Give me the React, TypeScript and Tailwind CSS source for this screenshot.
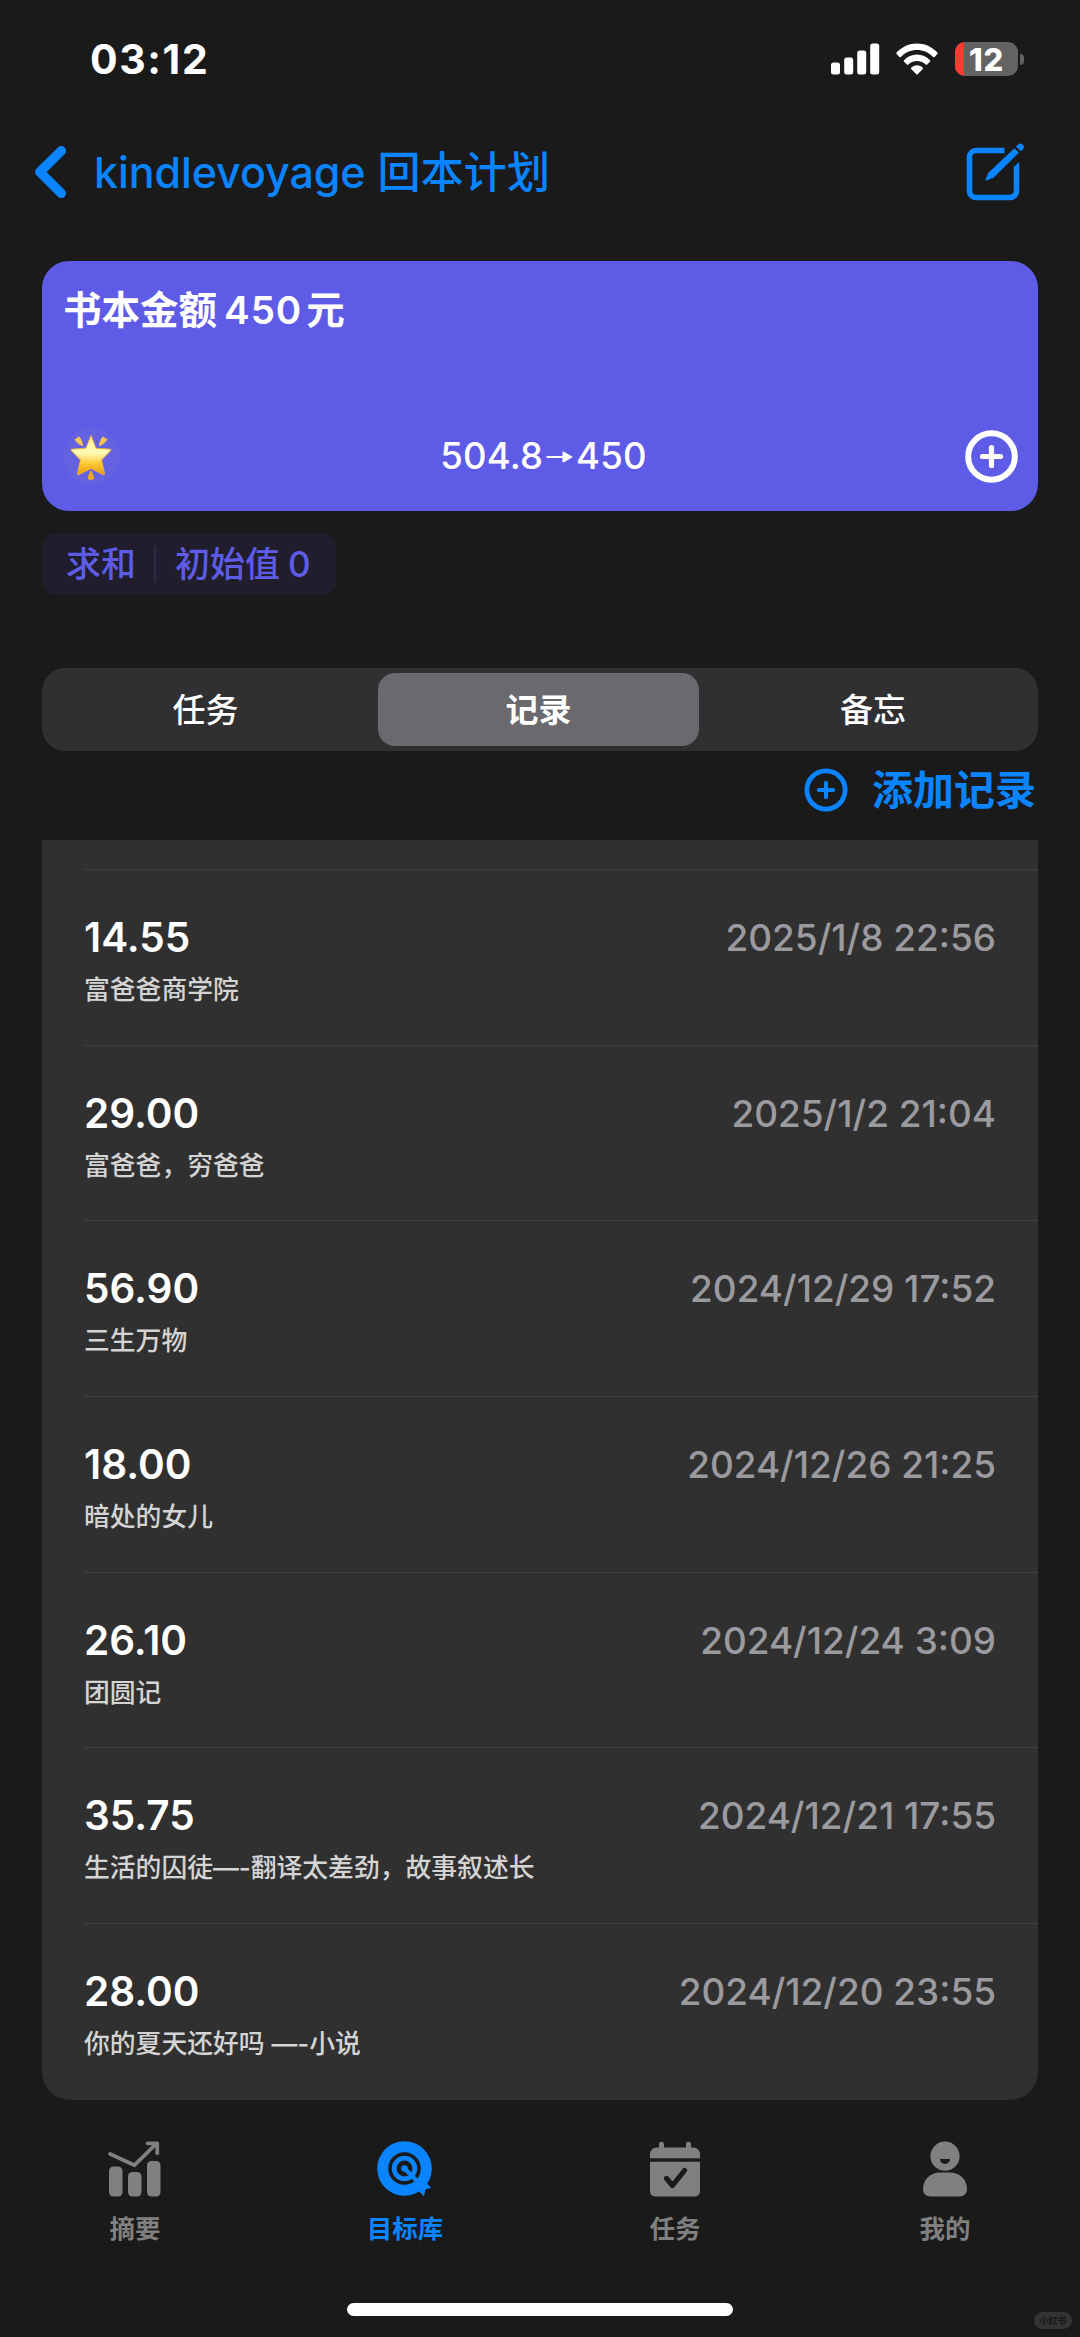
import React from "react";

const records = [
  { amount: "14.55", note: "富爸爸商学院", date: "2025/1/8 22:56" },
  { amount: "29.00", note: "富爸爸，穷爸爸", date: "2025/1/2 21:04" },
  { amount: "56.90", note: "三生万物", date: "2024/12/29 17:52" },
  { amount: "18.00", note: "暗处的女儿", date: "2024/12/26 21:25" },
  { amount: "26.10", note: "团圆记", date: "2024/12/24 3:09" },
  { amount: "35.75", note: "生活的囚徒—-翻译太差劲，故事叙述长", date: "2024/12/21 17:55" },
  { amount: "28.00", note: "你的夏天还好吗 —-小说", date: "2024/12/20 23:55" },
];

function StatusBar() {
  return (
    <div className="flex h-[118px] shrink-0 items-center justify-between pl-[90px] pr-[56px] text-white">
      <span className="text-[41px] leading-none font-bold tracking-[1.600px]">03:12</span>
      <div className="flex items-center">
        <svg width="49" height="32" viewBox="0 0 49 32" fill="#fff">
          <rect x="0" y="19.5" width="9" height="12" rx="2.5" />
          <rect x="13.2" y="14.5" width="9" height="17" rx="2.5" />
          <rect x="26.2" y="7.5" width="9" height="24" rx="2.5" />
          <rect x="39.2" y="0.5" width="9" height="31" rx="2.5" />
        </svg>
        <svg className="ml-[16px]" width="42" height="32" viewBox="0 0 42 32" fill="#fff">
          <path d="M0.6 9.6C6 3.8 13.2 0.5 21 0.5s15 3.3 20.400 9.100c.4.5.4 1 0 1.400l-2.800 2.900c-.4.4-1 .4-1.400 0C32.800 9.500 27.200 6.900 21 6.900S9.200 9.500 4.800 13.900c-.4.400-1 .4-1.400 0L.6 11c-.4-.4-.4-.9 0-1.400Z" />
          <path d="M8 17.300C11.400 13.700 16 11.600 21 11.600s9.600 2.100 13 5.700c.4.400.4 1 0 1.400l-2.900 2.900c-.4.400-1 .4-1.400 0C27.400 19.300 24.400 18 21 18s-6.400 1.300-8.700 3.600c-.4.400-1 .4-1.400 0L8 18.700c-.4-.4-.4-1 0-1.400Z" />
          <path d="M15.200 24.700c1.500-1.500 3.500-2.400 5.800-2.400s4.300.9 5.800 2.400c.4.400.4 1 0 1.400l-5.100 5.100c-.4.400-1 .4-1.400 0l-5.100-5.100c-.4-.4-.4-1 0-1.400Z" />
        </svg>
        <div className="ml-[17px] flex items-center">
          <div className="relative flex h-[34px] w-[63px] items-center justify-center overflow-hidden rounded-[10px] bg-[#636363]">
            <div className="absolute inset-y-0 left-0 w-[9px] bg-[#ff3b30]" />
            <span className="relative text-[31px] leading-none font-extrabold tracking-[0.800px]">12</span>
          </div>
          <div className="ml-[2px] h-[11px] w-[4px] rounded-r-full bg-[#636363]" />
        </div>
      </div>
    </div>
  );
}

function NavBar() {
  return (
    <div className="flex h-[108px] shrink-0 items-center pl-[34px] pr-[56px] text-[#0a84ff]">
      <svg width="33" height="54" viewBox="0 0 33 54" fill="none" stroke="#0a84ff" strokeWidth="9.500" strokeLinecap="round" strokeLinejoin="round">
        <path d="M27.300 5.800 5.800 27l21.500 21.300" />
      </svg>
      <div className="ml-[27px] flex text-[43px] leading-[54px] font-medium whitespace-nowrap">
        <span className="tracking-[-0.080px]">kindlevoyage</span>
        <span className="ml-[12px] tracking-[0.200px]">回本计划</span>
      </div>
      <svg className="ml-auto" width="58" height="58" viewBox="0 0 58 58" fill="none">
        <path d="M39 7H10.500A6.500 6.500 0 0 0 4 13.500v34a6.500 6.500 0 0 0 6.500 6.500h34a6.500 6.500 0 0 0 6.500-6.500V19" stroke="#0a84ff" strokeWidth="5.600" transform="translate(-0.500 0.500)" />
        <path d="M42 2 60 2 56 16 48 24Z" fill="#1a1a1a" />
        <path d="M48.400 5.200 52.900 9.700 27.500 34.700 20.600 37.500c-.7.300-1.400-.4-1.100-1.100l2.900-6.700Z" fill="#0a84ff" />
        <path d="M50 3.600 52 1.700a3.400 3.400 0 0 1 4.800 0 3.400 3.400 0 0 1 0 4.800L54.600 8.300Z" fill="#0a84ff" />
      </svg>
    </div>
  );
}

function GlowingStar() {
  return (
    <svg width="42" height="46" viewBox="0 0 42 46">
      <defs>
        <linearGradient id="star" x1="0" y1="0" x2="0" y2="1">
          <stop offset="0" stopColor="#fff0a0" />
          <stop offset="0.450" stopColor="#fffbb5" />
          <stop offset="0.720" stopColor="#fdc834" />
          <stop offset="1" stopColor="#e99a0c" />
        </linearGradient>
      </defs>
      <path d="M21 1.500 26 14.200 40 15.200c1 .1 1.200.9.500 1.600L31.500 26l3 13.500c.2 1-.6 1.600-1.400 1.100L21 34.500 8.900 40.600c-.8.500-1.600-.1-1.400-1.100l3-13.500L1.500 16.800c-.7-.7-.5-1.500.5-1.600L16 14.200Z" fill="url(#star)" stroke="#f3b42c" strokeWidth="0.900" strokeLinejoin="round" />
      <path d="M21 36.500c.8 0 3.200 6.500 3.200 8.200-1.500 1.300-4.900 1.300-6.400 0 0-1.700 2.400-8.200 3.200-8.200Z" fill="#efa926" />
      <path d="M4.500 5.500 9 2.500c1 0 4.500 7 4 9.500-1.500.8-7.500-4.500-8.500-6.500Z" fill="#f5c653" />
      <path d="M37.500 5.500 33 2.500c-1 0-4.500 7-4 9.500 1.500.8 7.500-4.500 8.500-6.500Z" fill="#f5c653" />
    </svg>
  );
}

function GoalCard() {
  return (
    <div className="mx-[42px] mt-[35px] flex h-[250px] shrink-0 flex-col justify-between rounded-[27px] bg-[#5e5ce6] pt-[25px] pr-[21px] pb-[26px] pl-[21px] text-white">
      <div className="flex text-[38.500px] leading-[48px] font-semibold">
        <span>书本金额</span>
        <span className="ml-[7px] tracking-[1px]">450</span>
        <span className="ml-[4px]">元</span>
      </div>
      <div className="grid grid-cols-[57px_1fr_52px] items-center">
        <div className="flex h-[57px] w-[57px] items-center justify-center rounded-full bg-[#6562e2] pr-[2px]">
          <GlowingStar />
        </div>
        <div className="flex items-center justify-center pl-[2px] text-[36.500px] leading-[57px] font-medium">
          <span className="tracking-[0.150px]">504.8</span>
          <svg className="mx-[3px]" width="27" height="12" viewBox="0 0 27 12" fill="#fff">
            <path d="M0.500 5h16V1.200c0-.6.500-.9 1-.6l8.600 4.800c.5.300.5.900 0 1.200l-8.600 4.800c-.5.300-1 0-1-.6V7H.5Z" />
          </svg>
          <span className="tracking-[0.150px]">450</span>
        </div>
        <svg width="53" height="53" viewBox="0 0 53 53" fill="none" stroke="#fff" strokeLinecap="round">
          <circle cx="26.500" cy="26.500" r="23.300" strokeWidth="6" />
          <path d="M26.500 17.500v18M17.500 26.500h18" strokeWidth="5.200" />
        </svg>
      </div>
    </div>
  );
}

function SummaryTag() {
  return (
    <div className="mt-[23px] ml-[42px] flex h-[60px] w-[294px] shrink-0 items-center rounded-[11px] bg-[#201e2d] pl-[24px] text-[35px] leading-[48px] font-medium text-[#5e5ce6]">
      <span>求和</span>
      <span className="ml-[18px] h-[36px] w-[2px] bg-[#2a2b4c]" />
      <span className="ml-[19px]">初始值</span>
      <span className="ml-[8px]">0</span>
    </div>
  );
}

function Segments() {
  return (
    <div className="mx-[42px] mt-[74px] grid h-[83px] shrink-0 grid-cols-[331px_321px_1fr] items-center rounded-[23px] bg-[#303032] pl-[5px] text-center text-[33px] leading-[48px] font-medium text-white">
      <span className="pr-[14px]">任务</span>
      <span className="flex h-[73px] items-center justify-center rounded-[17px] bg-[#6a696e] font-bold">记录</span>
      <span className="pl-[9px]">备忘</span>
    </div>
  );
}

function AddRecord() {
  return (
    <div className="flex h-[78px] shrink-0 items-center justify-end pr-[44px] text-[#0a84ff]">
      <svg width="44" height="44" viewBox="0 0 44 44" fill="none" stroke="#0a84ff" strokeLinecap="round">
        <circle cx="22" cy="22" r="19.100" strokeWidth="4.800" />
        <path d="M22 14.800v14.400M14.800 22h14.400" strokeWidth="4" />
      </svg>
      <span className="ml-[24px] text-[41px] leading-[56px] font-bold">添加记录</span>
    </div>
  );
}

function RecordList() {
  return (
    <div className="mx-[42px] mt-[11px] h-[1259.500px] shrink-0 overflow-hidden rounded-b-[28px] bg-[#303030] pt-[29px] pl-[42px]">
      {records.map((r) => (
        <div key={r.date} className="h-[175.700px] border-t-[1.500px] border-[#3f3f3f] pt-[44px] pr-[42px]">
          <div className="flex h-[48px] items-center justify-between">
            <span className="text-[40.500px] leading-[48px] font-semibold text-white">{r.amount}</span>
            <span className="text-[36.900px] leading-[48px] font-medium text-[#9b9a9f]">{r.date}</span>
          </div>
          <div className="mt-[12px] text-[25.800px] leading-[32px] font-medium text-[#d4d4d4]">{r.note}</div>
        </div>
      ))}
    </div>
  );
}

function ChartIcon() {
  return (
    <svg width="54" height="56" viewBox="0 0 54 56" fill="#808080">
      <rect x="1" y="25.500" width="13.500" height="30" rx="4.500" />
      <rect x="20" y="31" width="13.500" height="24.500" rx="4.500" />
      <rect x="39" y="20" width="13.500" height="35.500" rx="4.500" />
      <path d="M2.200 13 26.500 24.200 47.500 3.500M39.500 2.300h9.700v9.900" fill="none" stroke="#808080" strokeWidth="3.800" strokeLinecap="round" strokeLinejoin="round" />
    </svg>
  );
}

function TargetIcon() {
  return (
    <svg width="56" height="56" viewBox="0 0 56 56" fill="none">
      <circle cx="27.500" cy="27.500" r="27.300" fill="#0a84ff" />
      <circle cx="27.500" cy="27.500" r="14.500" stroke="#1a1a1a" strokeWidth="3.600" />
      <circle cx="27.500" cy="27.500" r="5.600" stroke="#1a1a1a" strokeWidth="4.600" />
      <path d="M27 27 44 44" stroke="#0a84ff" strokeWidth="4.200" />
      <path d="M45 38 54.300 46.800 48.600 48.300 46.900 55.300 38 46Z" fill="#0a84ff" />
    </svg>
  );
}

function CalendarIcon() {
  return (
    <svg width="50" height="56" viewBox="0 0 50 56" fill="#808080">
      <path d="M6.500 6.500H9V3.300a2.500 2.500 0 0 1 5 0v3.200h22V3.300a2.500 2.500 0 0 1 5 0v3.200h2.500A6.500 6.500 0 0 1 50 13v4.200H0V13a6.500 6.500 0 0 1 6.500-6.500Z" />
      <path d="M0 20.800h50v29.700a5 5 0 0 1-5 5H5a5 5 0 0 1-5-5Z" />
      <path d="m16.500 37.500 6 7L34.500 29.500" fill="none" stroke="#1a1a1a" strokeWidth="5.200" strokeLinecap="round" strokeLinejoin="round" />
    </svg>
  );
}

function PersonIcon() {
  return (
    <svg width="44" height="56" viewBox="0 0 44 56" fill="#808080">
      <circle cx="22" cy="15.200" r="14.600" />
      <path d="M17 18h10a5 5 0 0 1-10 0Z" fill="#1a1a1a" />
      <path d="M17 31.500h10c9.500 0 17 7 17 16.500 0 4.500-3 7.500-7.500 7.500h-29C3 55.500 0 52.500 0 48c0-9.500 7.500-16.500 17-16.500Z" />
    </svg>
  );
}

function TabBar() {
  const tabs = [
    { label: "摘要", icon: <ChartIcon />, active: false },
    { label: "目标库", icon: <TargetIcon />, active: true },
    { label: "任务", icon: <CalendarIcon />, active: false },
    { label: "我的", icon: <PersonIcon />, active: false },
  ];
  return (
    <div className="grid grow grid-cols-4 pt-[41px] text-[25.500px] leading-[32px] font-semibold">
      {tabs.map((t) => (
        <div key={t.label} className={t.active ? "flex flex-col items-center text-[#0a84ff]" : "flex flex-col items-center text-[#808080]"}>
          {t.icon}
          <span className="mt-[16px]">{t.label}</span>
        </div>
      ))}
    </div>
  );
}

export default function App() {
  return (
    <div
      lang="zh-CN"
      className="relative flex h-[2337px] w-[1080px] flex-col overflow-hidden bg-[#1a1a1a] font-['Inter','Noto_Sans_CJK_SC',sans-serif]"
    >
      <StatusBar />
      <NavBar />
      <GoalCard />
      <SummaryTag />
      <Segments />
      <AddRecord />
      <RecordList />
      <TabBar />
      <div className="mx-auto mb-[21px] h-[13px] w-[386px] shrink-0 rounded-full bg-white" />
      <div className="absolute right-[8px] bottom-[8px] flex h-[17px] w-[38px] items-center justify-center rounded-full bg-[#333333] text-[9px] leading-none font-bold text-[#161616]">
        小红书
      </div>
    </div>
  );
}
